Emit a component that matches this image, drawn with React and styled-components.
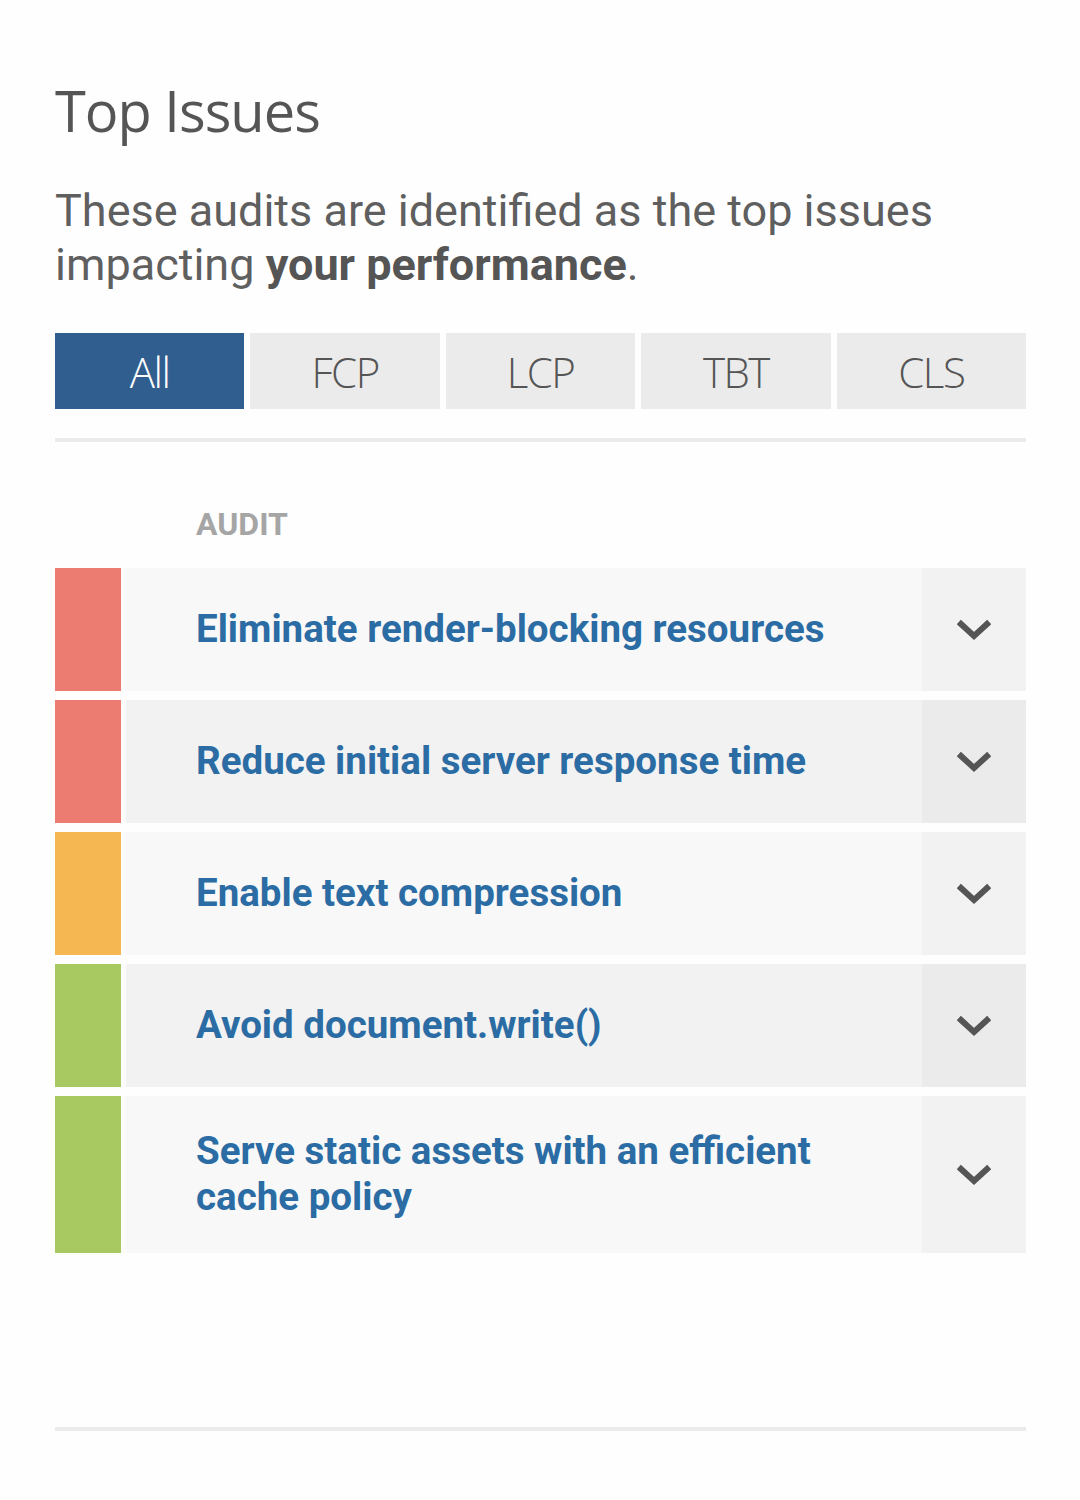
import React, { useState } from 'react';
import styled, { createGlobalStyle } from 'styled-components';

const GlobalStyle = createGlobalStyle`
	body {
		margin: 0;
		background: #fefefe;
		font-family: Roboto, "Liberation Sans", sans-serif;
	}
`;

const Page = styled.div`
	padding: 72px 54px 60px 55px;
`;

const Title = styled.h1`
	margin: 0;
	font-family: "Open Sans", "Noto Sans", sans-serif;
	font-weight: 400;
	font-size: 56px;
	line-height: 76px;
	color: #555;
	letter-spacing: -1px;
`;

const Intro = styled.p`
	margin: 36px 0 0;
	font-size: 45px;
	line-height: 54px;
	color: #5f5f5f;
	b {
		font-weight: 700;
		color: #555;
	}
`;

const Tabs = styled.div`
	display: grid;
	grid-template-columns: repeat(5, 1fr);
	gap: 6px;
	margin-top: 41px;
`;

const Tab = styled.button`
	height: 76px;
	border: 0;
	padding: 0;
	font-family: "Open Sans", "Noto Sans", sans-serif;
	font-size: 42px;
	font-weight: 300;
	letter-spacing: -1.5px;
	color: ${(p) => (p.active ? '#fff' : '#555')};
	background: ${(p) => (p.active ? '#305e8e' : '#ebebeb')};
	cursor: pointer;
`;

const Divider = styled.hr`
	margin: ${(p) => p.margin || '29px 0 0'};
	border: 0;
	height: 4px;
	background: #ebebeb;
`;

const HeadLabel = styled.div`
	margin: 60px 0 0 141px;
	font-size: 32px;
	font-weight: 700;
	color: #a5a5a5;
	line-height: 44px;
`;

const List = styled.div`
	display: flex;
	flex-direction: column;
	gap: 9px;
	margin-top: 22px;
`;

const Row = styled.div`
	display: flex;
	min-height: 123px;
	background: ${(p) => (p.even ? '#f2f2f2' : '#f8f8f8')};
`;

const Score = styled.div`
	flex: 0 0 66px;
	background: ${(p) => p.color};
	border-right: 5px solid #fbfbfb;
`;

const AuditTitle = styled.div`
	flex: 1;
	display: flex;
	align-items: center;
	padding: 32px 40px 33px 70px;
	font-size: 38.5px;
	font-weight: 700;
	line-height: 46px;
	color: #2a6ca3;
`;

const Toggle = styled.div`
	flex: 0 0 104px;
	display: flex;
	align-items: center;
	justify-content: center;
	background: ${(p) => (p.even ? '#ebebeb' : '#f2f2f2')};
	svg {
		width: 34px;
		height: 22px;
	}
`;

const audits = [
	{ title: 'Eliminate render-blocking resources', color: '#ec7c72' },
	{ title: 'Reduce initial server response time', color: '#ec7c72' },
	{ title: 'Enable text compression', color: '#f5b751' },
	{ title: 'Avoid document.write()', color: '#a8c862' },
	{ title: 'Serve static assets with an efficient cache policy', color: '#a8c862' },
];

const Chevron = () => (
	<svg viewBox="0 0 34 22">
		<path d="M4 5 L17 17 L30 5" fill="none" stroke="#555" strokeWidth="6" strokeLinecap="square" />
	</svg>
);

function App() {
	const [tab, setTab] = useState('All');

	return (
		<Page>
			<GlobalStyle />
			<Title>Top Issues</Title>
			<Intro>
				These audits are identified as the top issues impacting <b>your performance</b>.
			</Intro>
			<Tabs>
				{['All', 'FCP', 'LCP', 'TBT', 'CLS'].map((t) => (
					<Tab key={t} active={tab === t} onClick={() => setTab(t)}>
						{t}
					</Tab>
				))}
			</Tabs>
			<Divider />
			<HeadLabel>AUDIT</HeadLabel>
			<List>
				{audits.map((a, i) => (
					<Row key={a.title} even={i % 2 === 1}>
						<Score color={a.color} />
						<AuditTitle>{a.title}</AuditTitle>
						<Toggle even={i % 2 === 1}>
							<Chevron />
						</Toggle>
					</Row>
				))}
			</List>
			<Divider margin="174px 0 0" />
		</Page>
	);
}

export default App;
